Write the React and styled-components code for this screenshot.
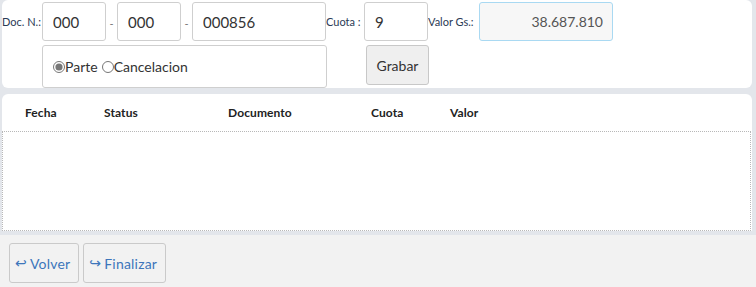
import React from 'react';
import styled, { createGlobalStyle } from 'styled-components';

const GlobalStyle = createGlobalStyle`
  html, body {
    margin: 0;
    padding: 0;
    background: #e3e6eb;
    font-family: Lato, "Liberation Sans", sans-serif;
  }
`;

const columns = [
  { label: 'Fecha', width: 79 },
  { label: 'Status', width: 124 },
  { label: 'Documento', width: 143 },
  { label: 'Cuota', width: 79 },
  { label: 'Valor', width: 80 },
];

class App extends React.Component {
  render() {
    return (
      <Page>
        <GlobalStyle />
        <Panel>
          <Row>
            <Label width={40}>Doc. N.:</Label>
            <Field width={64} defaultValue="000" />
            <Dash>-</Dash>
            <Field width={64} defaultValue="000" />
            <Dash>-</Dash>
            <Field width={134} defaultValue="000856" />
            <Label width={38}>Cuota :</Label>
            <Field width={64} defaultValue="9" />
            <Label width={51}>Valor Gs.:</Label>
            <Field width={134} defaultValue="38.687.810" readOnly highlight />
          </Row>
          <Row indent={40}>
            <RadioBox>
              <Option>
                <Radio type="radio" name="tipo" defaultChecked />
                Parte
              </Option>
              <Option>
                <Radio type="radio" name="tipo" />
                Cancelacion
              </Option>
            </RadioBox>
            <SaveButton>Grabar</SaveButton>
          </Row>
        </Panel>
        <TablePanel>
          <HeaderRow>
            {columns.map(col => (
              <HeaderCell key={col.label} width={col.width}>
                {col.label}
              </HeaderCell>
            ))}
          </HeaderRow>
          <TableBody />
        </TablePanel>
        <Footer>
          <FooterButton>
            <Arrow>↩</Arrow>Volver
          </FooterButton>
          <FooterButton>
            <Arrow>↪</Arrow>Finalizar
          </FooterButton>
        </Footer>
      </Page>
    );
  }
}

const Page = styled.div`
  width: 756px;
  height: 287px;
  display: flex;
  flex-direction: column;
  overflow: hidden;
`;

const Panel = styled.div`
  margin: 0 4px 0 2px;
  height: 88px;
  box-sizing: border-box;
  padding-top: 2px;
  background: #fff;
  border-radius: 6px;
  display: flex;
  flex-direction: column;
  gap: 4px;
`;

const Row = styled.div`
  display: flex;
  align-items: center;
  padding-left: ${props => props.indent || 0}px;
`;

const Label = styled.span`
  width: ${props => props.width}px;
  font-size: 11px;
  color: #2b3a55;
  white-space: nowrap;
  overflow: hidden;
`;

const Dash = styled.span`
  width: 11px;
  text-align: center;
  font-size: 11px;
  color: #777;
  padding-top: 4px;
`;

const Field = styled.input`
  width: ${props => props.width}px;
  height: 39px;
  box-sizing: border-box;
  border: 1px solid ${props => (props.highlight ? '#a9d9f2' : '#cfcfcf')};
  border-radius: 3px;
  background: ${props => (props.highlight ? '#f7f7f7' : '#fff')};
  padding: 0 ${props => (props.highlight ? '9px' : '10px')};
  text-align: ${props => (props.highlight ? 'right' : 'left')};
  font-family: Lato, "Liberation Sans", sans-serif;
  font-size: ${props => (props.highlight ? '14px' : '15px')};
  color: ${props => (props.highlight ? '#555' : '#333')};
  outline: none;
`;

const RadioBox = styled.div`
  width: 285px;
  height: 43px;
  box-sizing: border-box;
  border: 1px solid #cfcfcf;
  border-radius: 3px;
  display: flex;
  align-items: center;
  padding-left: 10px;
  gap: 4px;
  font-size: 14px;
  color: #333;
`;

const Option = styled.label`
  display: flex;
  align-items: center;
`;

const Radio = styled.input`
  margin: 0;
  width: 12px;
  height: 12px;
  accent-color: #777;
`;

const SaveButton = styled.button`
  margin-left: 39px;
  margin-top: -3px;
  width: 63px;
  height: 40px;
  background: #efefef;
  border: 1px solid #c8c8c8;
  border-radius: 3px;
  font-family: Lato, "Liberation Sans", sans-serif;
  font-size: 14px;
  color: #333;
`;

const TablePanel = styled.div`
  margin: 6px 4px 0 2px;
  height: 137px;
  background: #fff;
  border-radius: 6px 6px 0 0;
  display: flex;
  flex-direction: column;
`;

const HeaderRow = styled.div`
  height: 37px;
  display: flex;
  align-items: center;
  padding-left: 23px;
`;

const HeaderCell = styled.div`
  width: ${props => props.width}px;
  font-size: 12px;
  font-weight: 700;
  color: #222;
  letter-spacing: 0.1px;
`;

const TableBody = styled.div`
  height: 100px;
  box-sizing: border-box;
  border: 1px dotted #b8b8b8;
  margin-right: 1px;
`;

const Footer = styled.div`
  margin-top: 4px;
  flex: 1;
  background: #f2f2f2;
  display: flex;
  gap: 4px;
  padding: 8px 0 0 9px;
  align-items: flex-start;
`;

const FooterButton = styled.button`
  height: 40px;
  padding: 0 8px 0 5px;
  display: flex;
  align-items: center;
  gap: 3px;
  background: #f2f2f2;
  border: 1px solid #cacaca;
  border-radius: 3px;
  font-family: Lato, "Liberation Sans", sans-serif;
  font-size: 14px;
  letter-spacing: 0.2px;
  color: #3d76bb;
`;

const Arrow = styled.span`
  font-family: "DejaVu Sans", sans-serif;
  font-size: 14px;
  line-height: 1;
`;

export default App;
